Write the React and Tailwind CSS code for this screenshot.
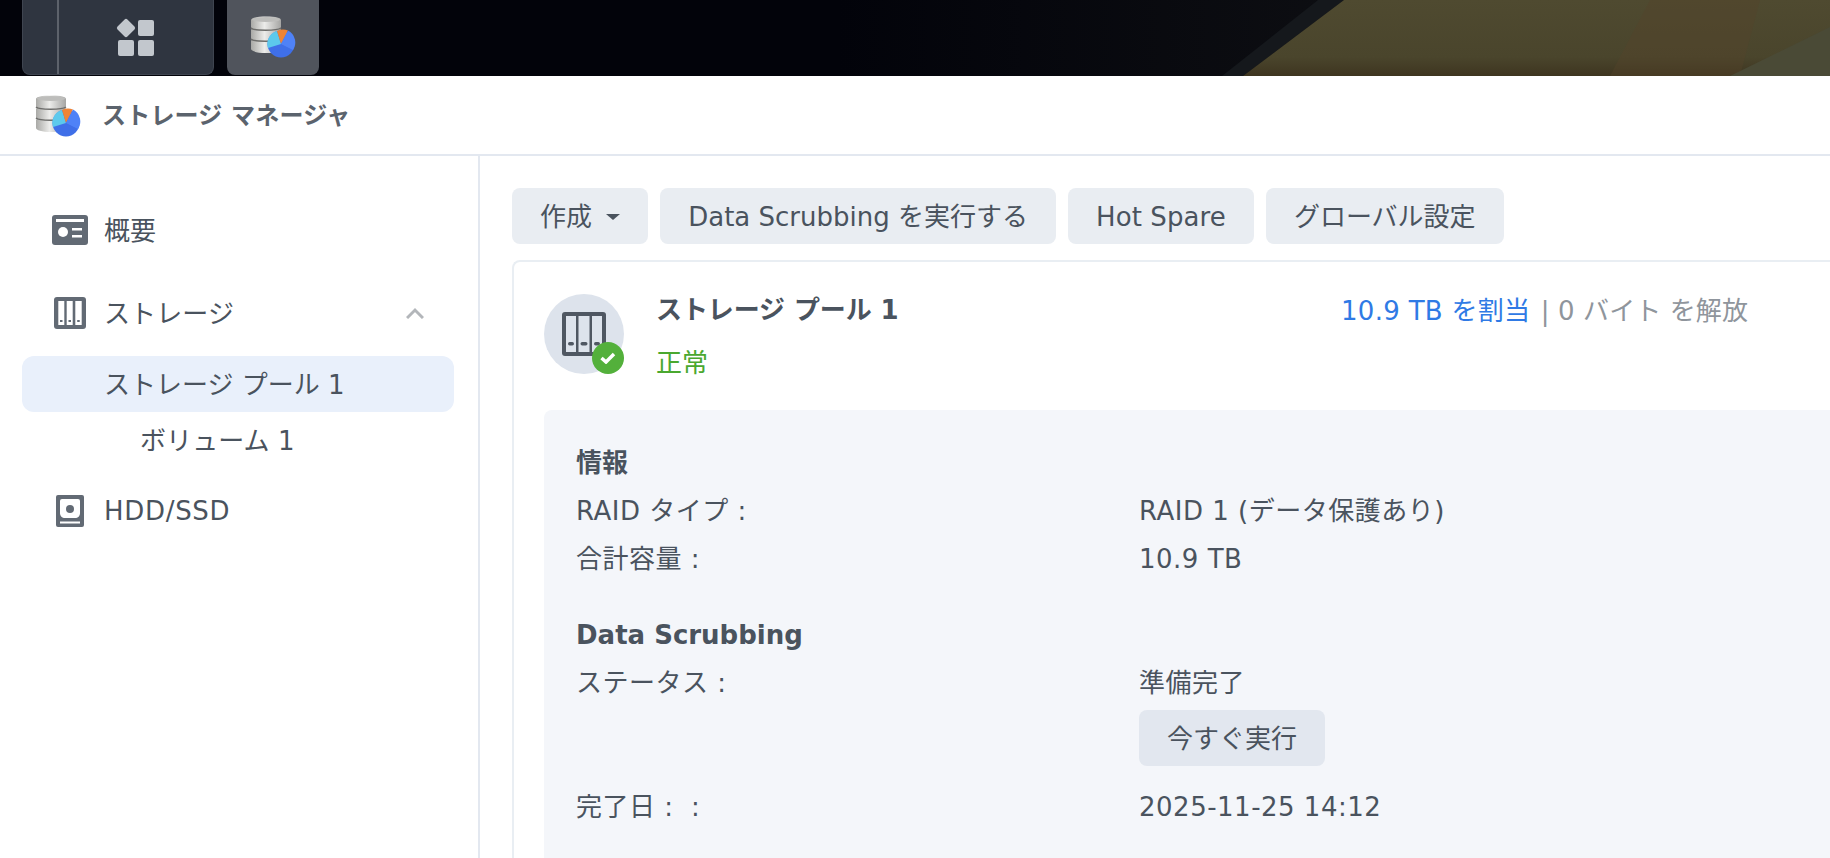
import React from "react";

const FONT = "font-['DejaVu_Sans','Noto_Sans_CJK_JP',sans-serif] tracking-[0.1px]";

const DbPieIcon = ({ id, className }) => (
  <svg viewBox="0 0 46 44" className={className}>
    <defs>
      <linearGradient id={id + "m"} x1="0" x2="1" y1="0" y2="0">
        <stop offset="0" stopColor="#a9a9a6" />
        <stop offset="0.45" stopColor="#ececea" />
        <stop offset="1" stopColor="#a5a5a3" />
      </linearGradient>
    </defs>
    <path d="M1 4c0-2 6-3.500 15.500-3.500S31 2 31 4v7l-.6 2 .6 1v8l-.6 2 .6 1v8c0 2-6 4-15 4S1 35 1 33v-8l.6-1-.6-1v-9l.6-1-.6-2z" fill={"url(#" + id + "m)"} />
    <ellipse cx="16" cy="3.500" rx="14" ry="2.500" fill="#bdbdbb" />
    <path d="M1 12c3 3 26 3 30 0M1 23c3 3 26 3 30 0" stroke="#6c6c6a" strokeWidth="1.500" fill="none" />
    <circle cx="31" cy="28" r="13.500" fill="#3f6fe8" />
    <path d="M31 28L18 32a13.500 13.500 0 0 1 9-17z" fill="#5cc9ec" />
    <path d="M31 28l-4-13a13.500 13.500 0 0 1 11-.5z" fill="#ee8436" />
    <path d="M31 28l7-13.500a13.500 13.500 0 0 1 5 19.500z" fill="#4f82f7" />
  </svg>
);

const OverviewIcon = () => (
  <svg viewBox="0 0 36 30" className="h-[30px] w-[36px]">
    <rect width="36" height="30" rx="3" fill="#626a74" />
    <rect x="4" y="4" width="28" height="3" fill="#fff" />
    <circle cx="11" cy="17" r="5" fill="#fff" />
    <rect x="20" y="13" width="10" height="2.500" fill="#fff" />
    <rect x="20" y="20" width="10" height="2.500" fill="#fff" />
  </svg>
);

const NasIcon = () => (
  <svg viewBox="0 0 32 32" className="h-[32px] w-[32px]">
    <rect width="32" height="32" rx="3" fill="#626a74" />
    <rect x="4.300" y="4" width="6" height="24" fill="#fff" />
    <rect x="12.700" y="4" width="6" height="24" fill="#fff" />
    <rect x="21.300" y="4" width="6.400" height="24" fill="#fff" />
    <rect x="6" y="23" width="2.500" height="2" fill="#626a74" />
    <rect x="14.500" y="23" width="2.500" height="2" fill="#626a74" />
    <rect x="23.200" y="23" width="2.500" height="2" fill="#626a74" />
  </svg>
);

const BigNasIcon = () => (
  <svg viewBox="0 0 44 44" className="h-[44px] w-[44px]">
    <rect width="44" height="44" rx="3" fill="#4f5762" />
    <rect x="4" y="4" width="10" height="36" fill="#dde3ec" />
    <rect x="16.500" y="4" width="11" height="36" fill="#dde3ec" />
    <rect x="30" y="4" width="10" height="36" fill="#dde3ec" />
    <rect x="6" y="30" width="6" height="3.500" rx="1.700" fill="#4f5762" />
    <rect x="18.500" y="30" width="7" height="3.500" rx="1.700" fill="#4f5762" />
    <rect x="32" y="30" width="6" height="3.500" rx="1.700" fill="#4f5762" />
  </svg>
);

const DiskIcon = () => (
  <svg viewBox="0 0 28 32" className="h-[32px] w-[28px]">
    <rect width="28" height="32" rx="2" fill="#626a74" />
    <path d="M4 6a2 2 0 0 1 2-2h16a2 2 0 0 1 2 2v12c0 3-2 5-5 5H9c-3 0-5-2-5-5z" fill="#fff" />
    <circle cx="14" cy="14" r="4" fill="#626a74" />
    <rect x="4" y="26.500" width="20" height="2" fill="#fff" />
  </svg>
);

const Btn = ({ children, className = "" }) => (
  <button className={"flex h-[56px] items-center rounded-lg bg-[#e9edf2] px-7 pt-[2px] text-[26px] text-[#4a535e] " + className}>
    {children}
  </button>
);

const Row = ({ label, children }) => (
  <div className="flex min-h-[48px] items-center pt-[2px] tracking-[0.5px]">
    <div className="w-[563px] shrink-0">{label}</div>
    <div>{children}</div>
  </div>
);

export default function App() {
  return (
    <div className={"flex h-screen w-full flex-col overflow-hidden bg-white text-[26px] text-[#4a535e] " + FONT}>
      {/* taskbar over the wallpaper */}
      <div className="relative h-[76px] shrink-0 overflow-hidden bg-[#02030a]">
        <svg viewBox="0 0 1830 76" className="absolute inset-0 h-full w-full" preserveAspectRatio="none">
          <defs>
            <linearGradient id="wall" x1="0" x2="0" y1="0" y2="1">
              <stop offset="0" stopColor="#4f4a30" />
              <stop offset="0.75" stopColor="#4a452c" />
              <stop offset="1" stopColor="#3e3520" />
            </linearGradient>
            <linearGradient id="night" x1="0" x2="1" y1="0" y2="0">
              <stop offset="0" stopColor="#02030a" />
              <stop offset="0.62" stopColor="#02030a" />
              <stop offset="1" stopColor="#0d0e12" />
            </linearGradient>
          </defs>
          <rect width="1350" height="76" fill="url(#night)" />
          <polygon points="1318,0 1344,0 1243,76 1222,76" fill="#15181c" />
          <polygon points="1344,0 1830,0 1830,76 1243,76" fill="url(#wall)" />
          <polygon points="1650,0 1760,0 1740,76 1610,76" fill="#54432a" opacity="0.4" />
          <polygon points="1830,27 1830,76 1730,76" fill="#4a4a36" />
        </svg>
        <div className="relative flex gap-[13px] pl-[22px]">
          <div className="flex h-[75px] w-[192px] rounded-b-lg border border-t-0 border-[#3f4550] bg-[#2f3540]">
            <div className="w-[36px] border-r-2 border-[#5d626b]" />
            <div className="flex flex-1 items-center justify-center pb-[1px] pr-[3px]">
              <svg viewBox="0 0 38 38" className="h-[38px] w-[38px]" fill="#c2c7cd">
                <rect x="3" y="3" width="14" height="14" rx="2" transform="rotate(45 10 10)" />
                <rect x="22" y="2" width="16" height="16" rx="2" />
                <rect x="2" y="22" width="16" height="16" rx="2" />
                <rect x="22" y="22" width="16" height="16" rx="2" />
              </svg>
            </div>
          </div>
          <div className="flex h-[75px] w-[92px] items-center justify-center rounded-b-lg bg-[#50545c]">
            <DbPieIcon id="tb" className="h-[44px] w-[46px]" />
          </div>
        </div>
      </div>

      {/* window title */}
      <div className="flex h-[80px] shrink-0 items-center border-b-2 border-[#e3e8f0] pl-[35px]">
        <DbPieIcon id="hd" className="mt-[3px] h-[44px] w-[46px]" />
        <span className="ml-[21px] pt-[2px] text-[24px] font-semibold tracking-[0.2px] text-[#5b636d]">ストレージ マネージャ</span>
      </div>

      <div className="flex min-h-0 flex-1">
        {/* sidebar */}
        <aside className="w-[480px] shrink-0 border-r-2 border-[#e3e8f0] pt-[46px]">
          <div className="flex h-[56px] items-center pl-[52px]">
            <OverviewIcon />
            <span className="ml-[16px] pt-[2px]">概要</span>
          </div>
          <div className="mt-[27px] flex h-[56px] items-center pl-[54px] pr-[54px]">
            <NasIcon />
            <span className="ml-[18px] pt-[2px]">ストレージ</span>
            <svg viewBox="0 0 18 12" className="ml-auto h-[12px] w-[18px]" fill="none" stroke="#b3b6ba" strokeWidth="3">
              <path d="M1 11l8-8 8 8" />
            </svg>
          </div>
          <div className="mx-[22px] mt-[15px] flex h-[56px] w-[432px] items-center rounded-xl bg-[#e9f0fb] pl-[82px] pt-[2px] tracking-normal">
            ストレージ プール 1
          </div>
          <div className="mt-[1px] flex h-[56px] items-center pl-[140px] pt-[1px]">ボリューム 1</div>
          <div className="mt-[14px] flex h-[56px] items-center pl-[56px]">
            <DiskIcon />
            <span className="ml-[20px] tracking-[0.7px]">HDD/SSD</span>
          </div>
        </aside>

        {/* main pane */}
        <main className="min-w-0 flex-1 pl-[32px] pt-[32px]">
          <div className="flex gap-3">
            <Btn>
              作成
              <span className="ml-[14px] h-0 w-0 border-x-[7px] border-t-[6px] border-x-transparent border-t-[#4a535e]" />
            </Btn>
            <Btn className="tracking-normal">Data Scrubbing を実行する</Btn>
            <Btn>Hot Spare</Btn>
            <Btn className="tracking-normal">グローバル設定</Btn>
          </div>

          <section className="mt-[16px] h-[700px] rounded-tl-lg border-l-2 border-t-2 border-[#e9eef3] pl-[30px] pt-[32px]">
            <div className="flex h-[116px] items-start pr-[82px]">
              <div className="relative flex h-[80px] w-[80px] shrink-0 items-center justify-center rounded-full bg-[#dde3ec]">
                <BigNasIcon />
                <span className="absolute bottom-0 right-0 flex h-[32px] w-[32px] items-center justify-center rounded-full bg-[#53b03b]">
                  <svg viewBox="0 0 16 12" className="h-[12px] w-[16px]" fill="none" stroke="#fff" strokeWidth="3.500">
                    <path d="M1.500 6l4.500 4 8-8" />
                  </svg>
                </span>
              </div>
              <div className="ml-[32px] flex-1">
                <div className="font-bold leading-[32px] tracking-[-0.1px]">ストレージ プール 1</div>
                <div className="mt-[20px] pt-[1px] leading-[32px] text-[#4aa82f]">正常</div>
              </div>
              <div className="pt-[1px] leading-[32px] text-[#8f959c]">
                <span className="mr-[2px] tracking-[0.3px] text-[#2f7ae5]">10.9 TB を割当</span> | 0 バイト を解放
              </div>
            </div>

            <div className="rounded-tl-lg bg-[#f4f6fa] pl-[32px] pt-[28px]">
              <div className="flex h-[48px] items-center pt-[2px] font-bold tracking-normal">情報</div>
              <Row label="RAID タイプ :">RAID 1 (データ保護あり)</Row>
              <Row label="合計容量 :">10.9 TB</Row>
              <div className="mt-[28px] flex h-[48px] items-center pt-[2px] font-bold tracking-normal">Data Scrubbing</div>
              <Row label="ステータス :">
                準備完了
              </Row>
              <div className="ml-[563px] mt-[4px] w-fit">
                <button className="flex h-[56px] items-center rounded-lg bg-[#e2e7ef] px-7 pt-[2px] tracking-normal">今すぐ実行</button>
              </div>
              <div className="mt-[16px]">
                <Row label={"完了日 :\u00a0\u00a0:"}>2025-11-25 14:12</Row>
              </div>
              <div className="h-[60px]" />
            </div>
          </section>
        </main>
      </div>
    </div>
  );
}
